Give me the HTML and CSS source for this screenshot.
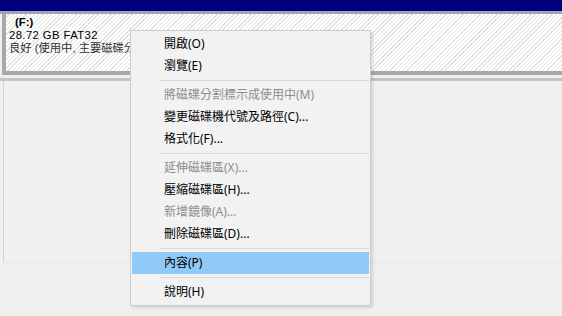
FILE: index.html
```html
<!DOCTYPE html>
<html lang="zh-Hant">
<head>
<meta charset="utf-8">
<title>磁碟管理</title>
<link rel="stylesheet" href="styles.css">
</head>
<body>
<div class="disk">
  <div class="bar"></div>
  <div class="part">
    <div class="name">(F:)</div>
    <div class="line size">28.72 GB FAT32</div>
    <div class="line status">良好 (使用中, 主要磁碟分割)</div>
  </div>
  <div class="rule"></div>
</div>
<div class="lower"></div>

<div class="menu">
  <div class="item">開啟(O)</div>
  <div class="item">瀏覽(E)</div>
  <div class="sep"></div>
  <div class="item off">將磁碟分割標示成使用中(M)</div>
  <div class="item">變更磁碟機代號及路徑(C)...</div>
  <div class="item">格式化(F)...</div>
  <div class="sep"></div>
  <div class="item off">延伸磁碟區(X)...</div>
  <div class="item">壓縮磁碟區(H)...</div>
  <div class="item off">新增鏡像(A)...</div>
  <div class="item">刪除磁碟區(D)...</div>
  <div class="sep"></div>
  <div class="item hot">內容(P)</div>
  <div class="sep"></div>
  <div class="item">說明(H)</div>
</div>
</body>
</html>
```

FILE: styles.css
```css
html, body {
  margin: 0;
  padding: 0;
}
body {
  width: 562px;
  height: 316px;
  overflow: hidden;
  background: #f0f0f0;
  font-family: "Noto Sans", "Noto Sans CJK TC", sans-serif;
  font-size: 12px;
  color: #000;
  position: relative;
}
.bar {
  height: 11px;
  background: #000080;
  border-bottom: 3px solid #a3a3b6;
}
.part {
  height: 55px;
  margin-left: 2px;
  border-left: 4px solid #a8a8a8;
  border-bottom: 4px solid #a8a8a8;
  padding: 2px 0 0 3px;
  background: repeating-linear-gradient(135deg, #ffffff 0 2px, #e2e2e2 2px 3px);
  font-family: "Liberation Sans", "Noto Sans CJK TC", sans-serif;
  font-size: 11.3px;
  line-height: 13px;
  white-space: nowrap;
  overflow: hidden;
}
.name {
  font-weight: bold;
  margin-left: 6px;
}
.size {
  letter-spacing: 0.4px;
}
.status {
  color: #333;
}
.rule {
  height: 3px;
  margin-top: 3px;
  background: #c4c4c4;
}
.lower {
  height: 181px;
  margin-left: 3px;
  border-left: 1px solid #d4d4d4;
  border-bottom: 1px solid #e6e6e6;
}
.menu {
  position: absolute;
  left: 130px;
  top: 30px;
  width: 237px;
  padding: 2px 1px;
  background: #f2f2f2;
  border: 1px solid #cccccc;
  box-shadow: 2px 2px 3px rgba(0, 0, 0, 0.12);
}
.item {
  height: 22px;
  line-height: 22px;
  padding-left: 32px;
  white-space: nowrap;
  color: #000;
}
.item.off {
  color: #8d8d8d;
}
.item.hot {
  background: #91c9f7;
}
.sep {
  height: 7px;
  margin-left: 28px;
  box-sizing: border-box;
  padding-top: 3px;
}
.sep::before {
  content: "";
  display: block;
  height: 1px;
  background: #d7d7d7;
}
```
